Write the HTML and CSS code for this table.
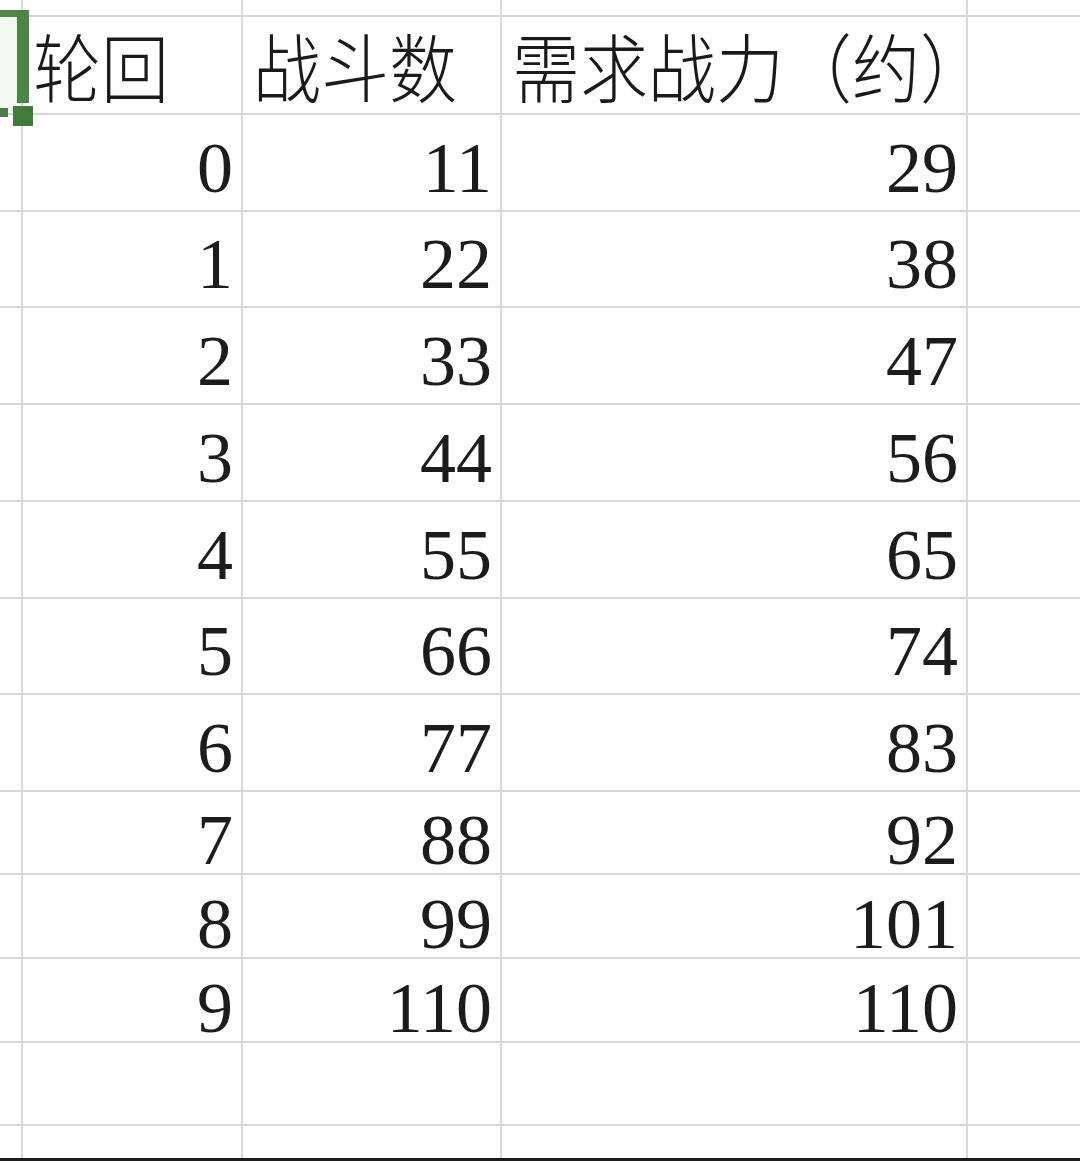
FILE: index.html
```html
<!DOCTYPE html>
<html lang="zh-CN">
<head>
<meta charset="utf-8">
<title>轮回 战斗数</title>
<link rel="stylesheet" href="styles.css">
</head>
<body>
<div class="sheet">
  <!-- partial top row -->
  <div class="c"></div><div class="c"></div><div class="c"></div><div class="c"></div><div class="c e"></div>

  <!-- header row -->
  <div class="c a-sel">
    <div class="sel-bar"></div>
    <div class="sel-top"></div>
    <div class="sel-handle"></div>
    <div class="sel-bottom"></div>
  </div>
  <div class="c hd"><span>轮回</span></div>
  <div class="c hd"><span>战斗数</span></div>
  <div class="c hd"><span>需求战力（约）</span></div>
  <div class="c e"></div>

  <div class="c"></div><div class="c n tall"><span>0</span></div><div class="c n tall"><span>11</span></div><div class="c n tall"><span>29</span></div><div class="c e"></div>
  <div class="c"></div><div class="c n tall"><span>1</span></div><div class="c n tall"><span>22</span></div><div class="c n tall"><span>38</span></div><div class="c e"></div>
  <div class="c"></div><div class="c n tall"><span>2</span></div><div class="c n tall"><span>33</span></div><div class="c n tall"><span>47</span></div><div class="c e"></div>
  <div class="c"></div><div class="c n tall"><span>3</span></div><div class="c n tall"><span>44</span></div><div class="c n tall"><span>56</span></div><div class="c e"></div>
  <div class="c"></div><div class="c n tall"><span>4</span></div><div class="c n tall"><span>55</span></div><div class="c n tall"><span>65</span></div><div class="c e"></div>
  <div class="c"></div><div class="c n tall"><span>5</span></div><div class="c n tall"><span>66</span></div><div class="c n tall"><span>74</span></div><div class="c e"></div>
  <div class="c"></div><div class="c n tall"><span>6</span></div><div class="c n tall"><span>77</span></div><div class="c n tall"><span>83</span></div><div class="c e"></div>
  <div class="c"></div><div class="c n short"><span>7</span></div><div class="c n short"><span>88</span></div><div class="c n short"><span>92</span></div><div class="c e"></div>
  <div class="c"></div><div class="c n short"><span>8</span></div><div class="c n short"><span>99</span></div><div class="c n short"><span>101</span></div><div class="c e"></div>
  <div class="c"></div><div class="c n short"><span>9</span></div><div class="c n short"><span>110</span></div><div class="c n short"><span>110</span></div><div class="c e"></div>

  <!-- empty row -->
  <div class="c"></div><div class="c"></div><div class="c"></div><div class="c"></div><div class="c e"></div>
  <!-- partial bottom row -->
  <div class="c last"></div><div class="c last"></div><div class="c last"></div><div class="c last"></div><div class="c e last"></div>
</div>
<div class="edge"></div>
</body>
</html>
```

FILE: styles.css
```css
* { box-sizing: border-box; }

html, body {
  margin: 0;
  padding: 0;
  background: #ffffff;
  width: 1080px;
  height: 1161px;
  overflow: hidden;
}

.sheet {
  display: grid;
  grid-template-columns: 23px 220px 259px 466px 112px;
  grid-template-rows: 17px 98px 97px 96px 97px 97px 97px 96px 97px 83px 84px 84px 83px 32px;
  color: #161616;
}

.c {
  border-right: 2px solid #dadada;
  border-bottom: 2px solid #d6d6d6;
  display: flex;
  min-width: 0;
  position: relative;
}

.c.e { border-right: none; }
.c.last { border-bottom: none; }

/* header cells */
.hd {
  align-items: center;
  padding-left: 10px;
  white-space: nowrap;
  overflow: visible;
  z-index: 1;
}
.hd span {
  font-family: "Noto Sans CJK SC", "Noto Sans CJK JP", sans-serif;
  font-weight: 300;
  font-size: 68px;
  line-height: 1;
  display: block;
  transform: scaleY(1.1);
  color: #1a1a1a;
}

/* numeric cells */
.n {
  justify-content: flex-end;
  align-items: flex-end;
  padding-right: 8px;
}
.n span {
  font-family: "Liberation Serif", "Times New Roman", serif;
  font-size: 72px;
  line-height: 50px;
  display: block;
  color: #1c1c1c;
}
.n.tall { padding-bottom: 17px; }
.n.short { padding-bottom: 8px; }

/* active cell selection in column A */
.a-sel { background: #f3f8f4; z-index: 2; }
.sel-bar {
  position: absolute;
  left: 17px;
  top: -7px;
  width: 12px;
  height: 93px;
  background: #4b8743;
}
.sel-top {
  position: absolute;
  left: 0;
  top: -7px;
  width: 29px;
  height: 7px;
  background: #4b8743;
}
.sel-handle {
  position: absolute;
  left: 13px;
  top: 89px;
  width: 20px;
  height: 20px;
  background: #3f7c38;
}
.sel-bottom {
  position: absolute;
  left: 0;
  top: 91px;
  width: 8px;
  height: 9px;
  background: #4a7f44;
}

.edge {
  height: 3px;
  background: #1c1c1c;
}
```
